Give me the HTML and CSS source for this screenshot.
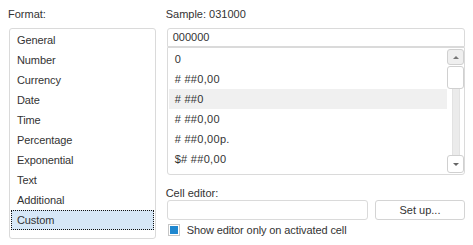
FILE: index.html
```html
<!DOCTYPE html>
<html lang="en">
  <head>
    <meta charset="UTF-8" />
    <title>Format Cells</title>
    <link rel="stylesheet" href="styles.css">
  </head>
  <body>
    <div class="dialog">
      <!-- format categories -->
      <div class="left">
        <div class="caption">Format:</div>
        <ul class="format-list">
          <li>General</li>
          <li>Number</li>
          <li>Currency</li>
          <li>Date</li>
          <li>Time</li>
          <li>Percentage</li>
          <li>Exponential</li>
          <li>Text</li>
          <li>Additional</li>
          <li class="selected">Custom</li>
        </ul>
      </div>

      <!-- custom format -->
      <div class="right">
        <div class="caption">Sample: 031000</div>
        <div class="mask-input">000000</div>
        <div class="mask-list">
          <ul class="mask-items">
            <li>0</li>
            <li># ##0,00</li>
            <li class="hover"># ##0</li>
            <li># ##0,00</li>
            <li># ##0,00p.</li>
            <li>$# ##0,00</li>
          </ul>
          <div class="scrollbar">
            <div class="sb-btn up"><span class="arrow-up"></span></div>
            <div class="sb-thumb"></div>
            <div class="sb-track"></div>
            <div class="sb-btn down"><span class="arrow-down"></span></div>
          </div>
        </div>

        <div class="caption editor-caption">Cell editor:</div>
        <div class="editor-row">
          <div class="editor-input"></div>
          <button type="button" class="setup-btn">Set up...</button>
        </div>
        <label class="check-row">
          <span class="checkbox"></span>
          Show editor only on activated cell
        </label>
      </div>
    </div>
  </body>
</html>
```

FILE: styles.css
```css
/* base */
body {
  margin: 0;
  background: #fff;
  font-family: "Liberation Sans", Arial, sans-serif;
  font-size: 11px;
  color: #333;
}

.dialog {
  display: flex;
  gap: 11px;
  padding: 7px 8px 0 9px;
}

.left {
  width: 147px;
}

.right {
  width: 299px;
}

.caption {
  height: 14px;
  line-height: 14px;
  margin-bottom: 7px;
  margin-left: -1px;
}

/* list of categories */
.format-list {
  list-style: none;
  margin: 0;
  padding: 1px;
  height: 207px;
  border: 1px solid #dadada;
  border-radius: 3px;
  letter-spacing: -0.1px;
}

.format-list li {
  height: 20px;
  line-height: 20px;
  padding-left: 6px;
  box-sizing: border-box;
}

.format-list li.selected {
  background-color: #d6e7f7;
  border: 1px dotted #111;
  line-height: 18px;
  padding-left: 5px;
}

/* mask field */
.mask-input {
  height: 17px;
  line-height: 17px;
  padding-left: 5px;
  border: 1px solid #dadada;
  border-radius: 3px 3px 0 0;
}

.mask-list {
  display: flex;
  height: 126px;
  border: 1px solid #dadada;
  border-radius: 0 0 3px 3px;
}

.mask-items {
  flex: 1;
  list-style: none;
  margin: 0;
  padding: 1px 0 0 1px;
  letter-spacing: 0.3px;
}

.mask-items li {
  height: 20px;
  line-height: 20px;
  padding-left: 6px;
}

.mask-items li.hover {
  background-color: #f0f0f0;
}

/* scrollbar */
.scrollbar {
  width: 17px;
  display: flex;
  flex-direction: column;
  align-items: center;
  padding: 1px 0;
}

.sb-btn {
  width: 17px;
  box-sizing: border-box;
  border: 1px solid #d0d0d0;
  border-radius: 3px;
  display: flex;
  align-items: center;
  justify-content: center;
}

.sb-btn.up {
  height: 16px;
  background: #efefef;
}

.sb-btn.down {
  height: 18px;
  background: #fff;
}

.arrow-up {
  width: 0;
  height: 0;
  border-left: 3px solid transparent;
  border-right: 3px solid transparent;
  border-bottom: 3px solid #777;
}

.arrow-down {
  width: 0;
  height: 0;
  border-left: 3px solid transparent;
  border-right: 3px solid transparent;
  border-top: 3px solid #666;
}

.sb-thumb {
  width: 17px;
  height: 23px;
  box-sizing: border-box;
  margin-top: 1px;
  border: 1px solid #d0d0d0;
  border-radius: 3px;
  background: #fff;
}

.sb-track {
  flex: 1;
  width: 6px;
  background: #ebebeb;
  border-left: 1px solid #e2e2e2;
  border-right: 1px solid #e2e2e2;
}

/* cell editor */
.editor-caption {
  margin-top: 11px;
  margin-bottom: 0;
}

.editor-row {
  display: flex;
  gap: 7px;
  height: 20px;
}

.editor-input {
  flex: 1;
  border: 1px solid #dadada;
  border-radius: 3px;
}

.setup-btn {
  width: 90px;
  height: 20px;
  padding: 0;
  border: 1px solid #d4d4d4;
  border-radius: 3px;
  background: #fff;
  font: inherit;
  color: #333;
}

.check-row {
  display: flex;
  align-items: center;
  gap: 7px;
  height: 14px;
  margin-top: 3px;
  padding-left: 1px;
  letter-spacing: -0.1px;
}

.checkbox {
  width: 8px;
  height: 8px;
  padding: 1px;
  border: 1px solid #c6c6c6;
  background: #1f87cf;
  background-clip: content-box;
}
```
